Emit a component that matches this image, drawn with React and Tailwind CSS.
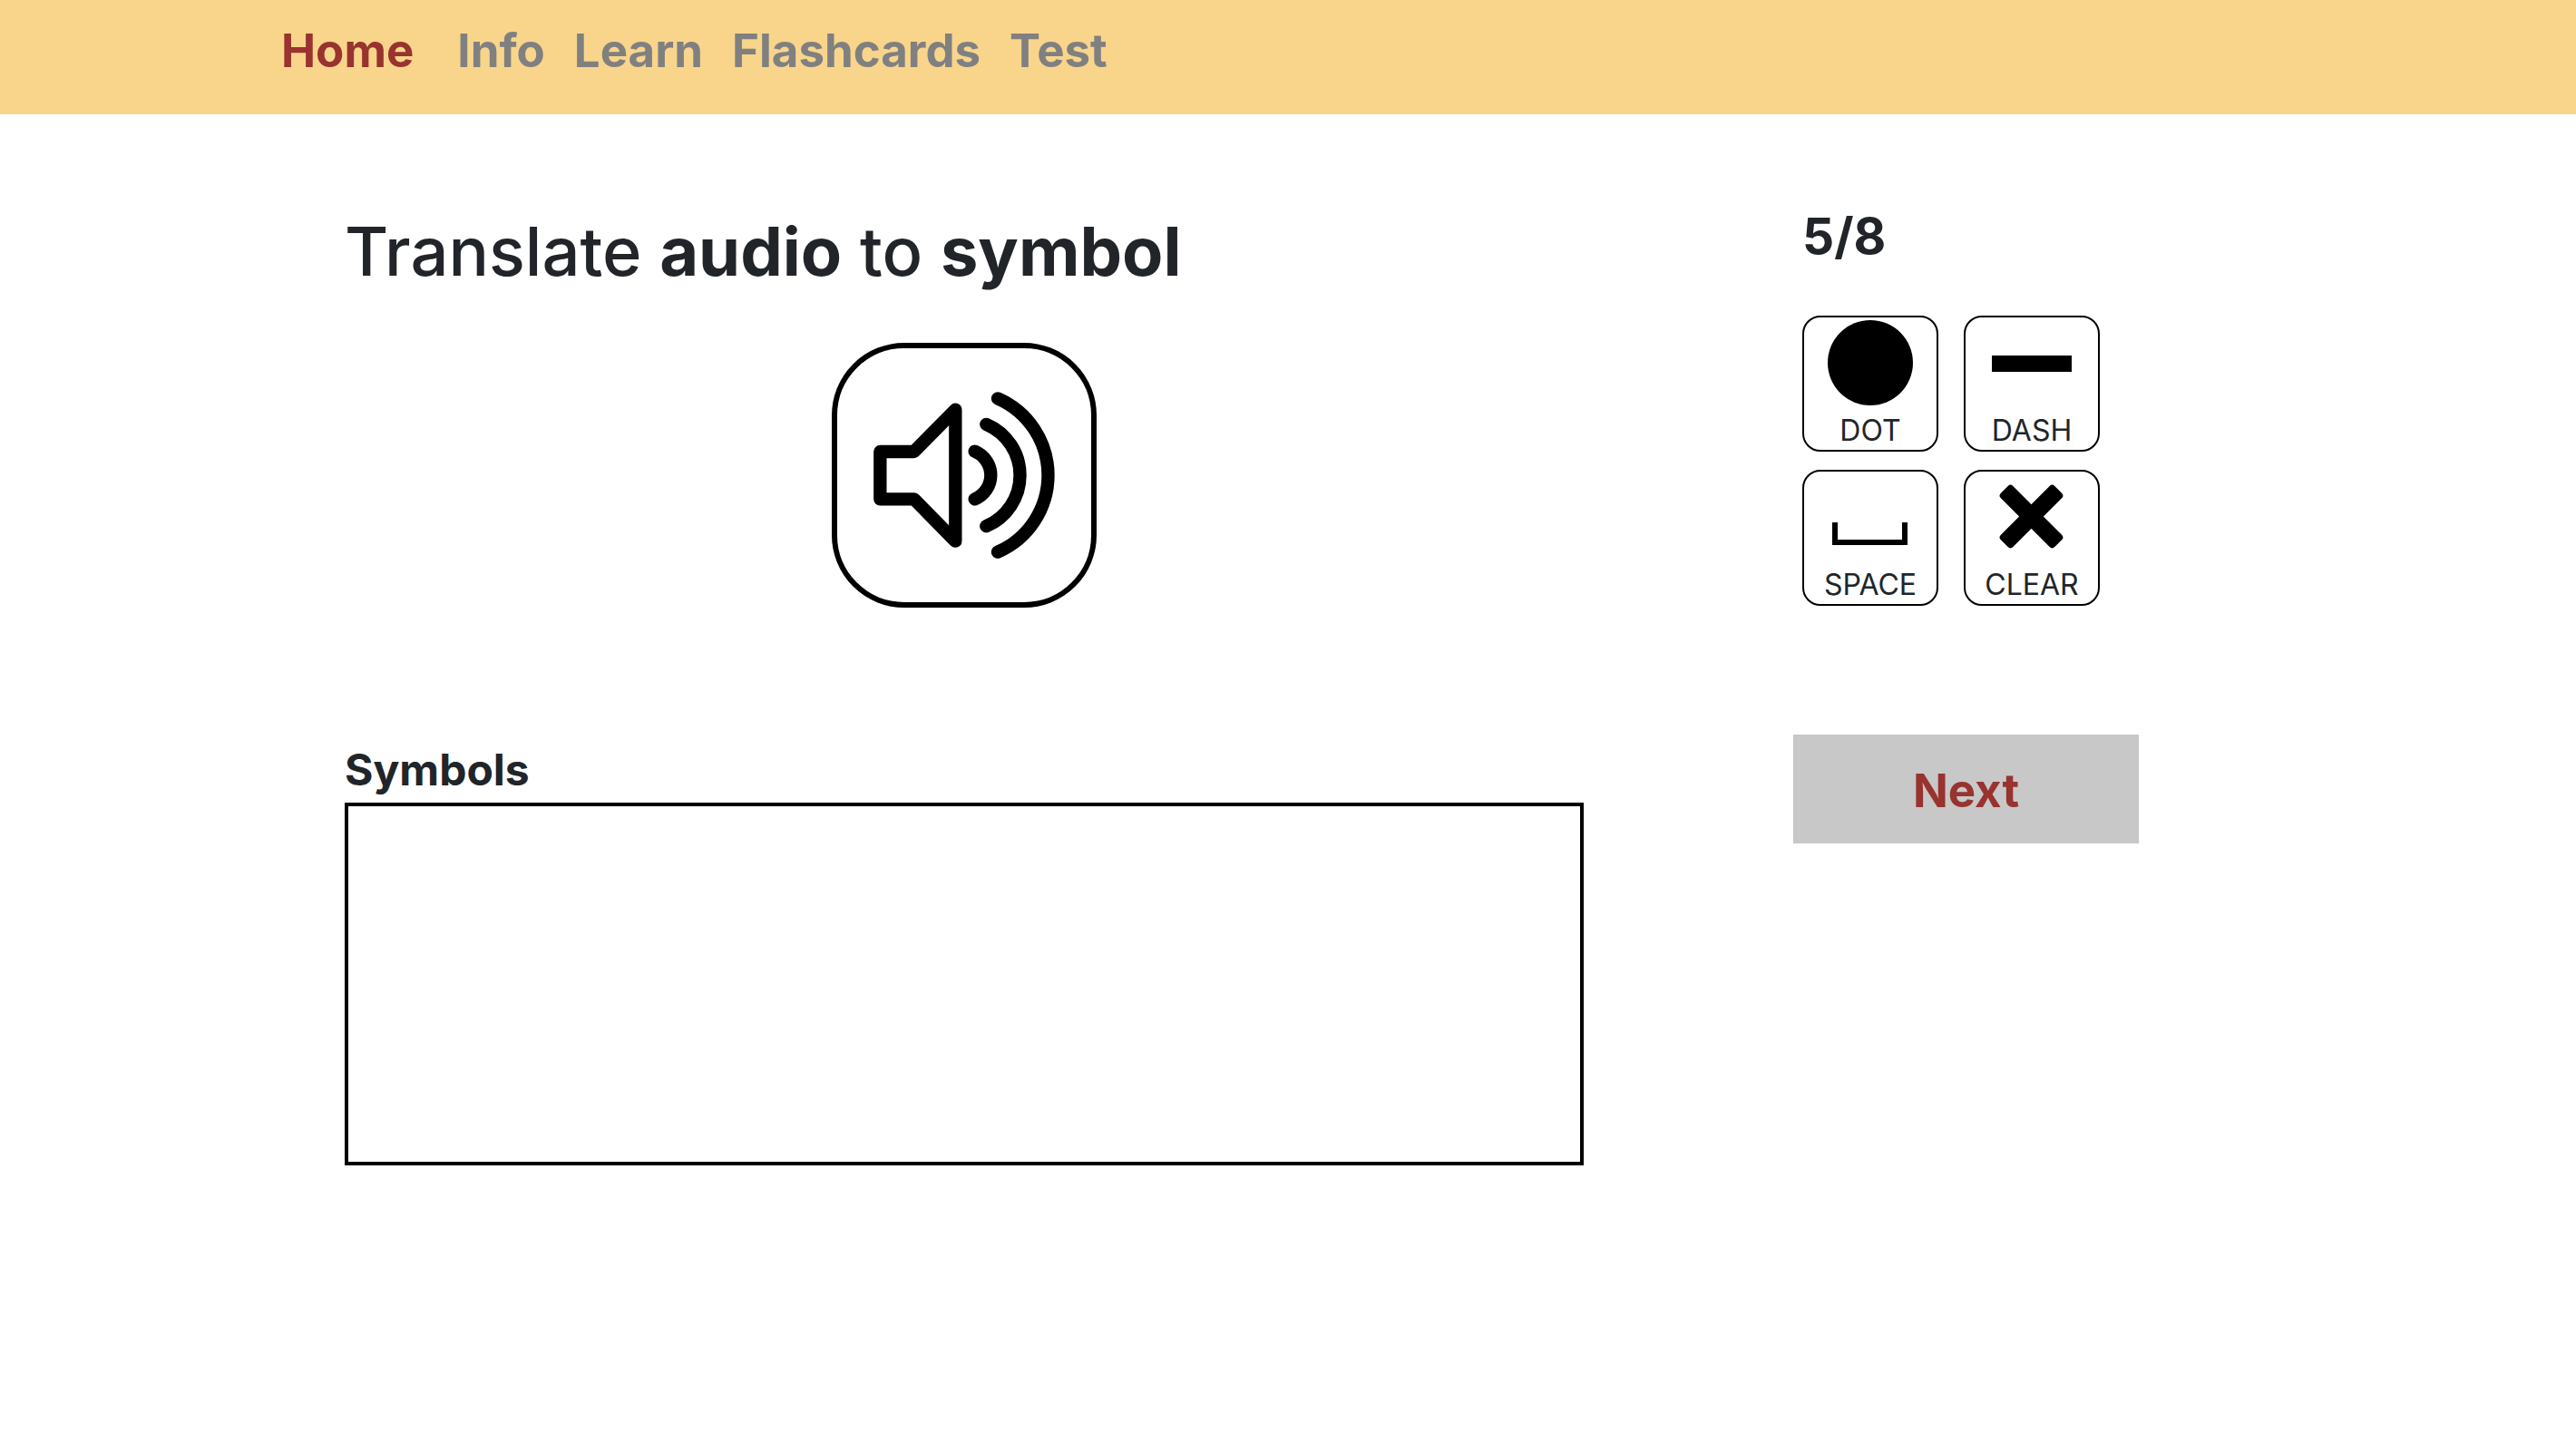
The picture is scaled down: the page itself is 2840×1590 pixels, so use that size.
const links = ["Info", "Learn", "Flashcards", "Test"];

function SpeakerIcon() {
  return (
    <svg
      viewBox="69 72 840 840"
      className="size-full"
      fill="none"
      stroke="black"
      strokeWidth="43"
      strokeLinecap="round"
      strokeLinejoin="round"
      aria-hidden="true"
    >
      <path d="M211 414H323L460 275V710L323 571H211Z" />
      <path d="M524 413A85.4 85.4 0 0 1 524 571" />
      <path d="M562 323.5A183 183 0 0 1 562 660.5" />
      <path d="M600 238A277 277 0 0 1 600 746" />
    </svg>
  );
}

const keys = [
  { label: "DOT", icon: <circle cx="73" cy="50" r="47" /> },
  { label: "DASH", icon: <rect x="29" y="42" width="88" height="18" /> },
  { label: "SPACE", icon: <path d="M31 56h6v19h71V56h6v25H31z" /> },
  {
    label: "CLEAR",
    icon: (
      <g transform="translate(72.5 49.5)">
        <rect x="-42" y="-9.5" width="84" height="19" rx="4" transform="rotate(45)" />
        <rect x="-42" y="-9.5" width="84" height="19" rx="4" transform="rotate(-45)" />
      </g>
    ),
  },
];

function KeyButton({ label, icon }) {
  return (
    <button
      type="button"
      className="flex size-[150px] flex-col items-center rounded-[20px] border-2 border-black bg-white text-[32px] leading-[40px]"
    >
      <svg viewBox="0 0 146 100" className="w-full shrink-0" fill="black" aria-hidden="true">
        {icon}
      </svg>
      <span className="pt-[5px]">{label}</span>
    </button>
  );
}

export default function App() {
  return (
    <div className="min-h-screen bg-white font-['Inter',sans-serif] text-[#212529]">
      <header className="bg-[#f8d58b]">
        <nav className="mx-auto flex h-[126px] max-w-[2280px] items-start gap-8 px-[30px] pt-4 text-[51px] leading-[80px] font-bold text-[#808080]">
          <a href="#home" className="mr-4 text-[#98332f]">
            Home
          </a>
          {links.map((name) => (
            <a key={name} href={"#" + name.toLowerCase()}>
              {name}
            </a>
          ))}
        </nav>
      </header>

      <main className="mx-auto flex max-w-[2280px] items-start gap-[231px] pl-[100px]">
        <section className="w-[1366px] pt-[102px]">
          <h1 className="text-[74px] leading-[98px] font-medium">
            Translate <b className="font-bold">audio</b> to <b className="font-bold">symbol</b>
          </h1>
          <button
            type="button"
            aria-label="Play audio"
            className="mx-auto mt-[52px] block size-[292px] rounded-[80px] border-[6px] border-black bg-white"
          >
            <SpeakerIcon />
          </button>
          <label htmlFor="symbols" className="mt-[148px] block text-[48px] leading-[62px] font-bold">
            Symbols
          </label>
          <textarea
            id="symbols"
            className="mt-[5px] block h-[400px] w-full resize-none border-4 border-black p-4 text-[48px] outline-none"
          />
        </section>

        <aside className="w-[381px] pt-[100px]">
          <div className="px-[10px]">
            <p className="text-[55px] leading-[68px] font-bold">5/8</p>
            <div className="mt-[54px] grid w-fit grid-cols-2 gap-x-7 gap-y-5">
              {keys.map((k) => (
                <KeyButton key={k.label} {...k} />
              ))}
            </div>
          </div>
          <button
            type="button"
            className="mt-[142px] h-[120px] w-full bg-[#c8c8c8] pt-[3px] text-[51px] leading-[78px] font-bold text-[#98332f]"
          >
            Next
          </button>
        </aside>
      </main>
    </div>
  );
}
